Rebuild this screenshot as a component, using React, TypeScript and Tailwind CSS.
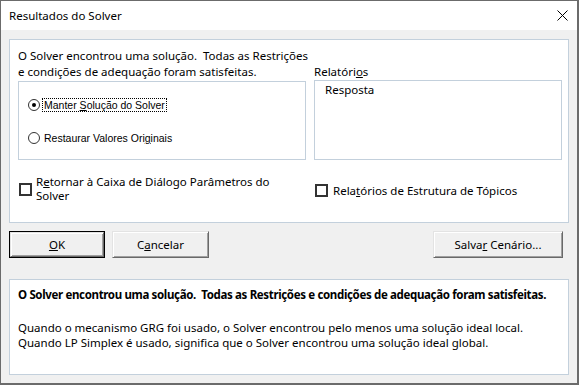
import React from "react";

const F = { fontFamily: '"Segoe UI", "Noto Sans", sans-serif' };
const S = { fontFamily: '"Liberation Sans", Arial, sans-serif' };

function Radio({ checked }: { checked?: boolean }) {
  return (
    <span className="w-[12px] h-[12px] rounded-full border border-[#333] bg-white flex items-center justify-center shrink-0">
      {checked && <span className="w-[4px] h-[4px] rounded-full bg-black" />}
    </span>
  );
}

function Check() {
  return <span className="w-[13px] h-[13px] border-2 border-[#333] bg-white shrink-0" />;
}

function Btn({ children, def, w }: { children: React.ReactNode; def?: boolean; w: string }) {
  const inner = (
    <div className="h-full w-full bg-[#f0f0f0] border border-t-[#e3e3e3] border-l-[#e3e3e3] border-r-[#696969] border-b-[#696969] shadow-[inset_1px_1px_#fff,inset_-1px_-1px_#a0a0a0] flex items-center justify-center text-[11.5px] text-black">
      {children}
    </div>
  );
  return (
    <div className={`${w} h-[27px] ${def ? "border border-black" : ""}`} style={F}>
      {inner}
    </div>
  );
}

export default function App() {
  return (
    <div className="w-[579px] h-[385px] border border-[#6b6b6b] border-r-2 border-b-2 bg-[#f0f0f0] flex flex-col overflow-hidden" style={F}>
      <div className="h-[29px] bg-white flex items-center justify-between pl-[8px] pr-[9px] shrink-0">
        <span className="text-[11.5px] text-black">Resultados do Solver</span>
        <svg width="11" height="11" viewBox="0 0 11 11">
          <path d="M0.5 0.5 L10.5 10.5 M10.5 0.5 L0.5 10.5" stroke="#000" strokeWidth="1" />
        </svg>
      </div>
      <div className="pl-[8px] flex flex-col">
        <div className="mt-[9px] w-[560px] h-[184px] bg-white border border-[#c3d0dc] pl-[8px] pt-[8px] flex flex-col">
          <div className="flex gap-[8px]">
            <div className="w-[288px] flex flex-col">
              <div className="text-[11.5px] leading-[16px] text-black whitespace-nowrap">
                O Solver encontrou uma solução.&nbsp; Todas as Restrições
                <br />
                e condições de adequação foram satisfeitas.
              </div>
              <div className="mt-[1px] h-[79px] border border-[#c3d0dc] flex flex-col pl-[9px] pt-[16px]">
                <div className="flex items-center h-[14px]">
                  <Radio checked />
                  <span
                    className="ml-[3px] text-[10.5px] leading-[12px] px-[1px] outline-1 outline-dotted outline-black text-black whitespace-nowrap"
                    style={S}
                  >
                    Manter <u>S</u>olução do Solver
                  </span>
                </div>
                <div className="flex items-center h-[14px] mt-[19px]">
                  <Radio />
                  <span className="ml-[4px] text-[10.5px] leading-[12px] text-black whitespace-nowrap" style={S}>
                    Restaurar Valores Ori<u>g</u>inais
                  </span>
                </div>
              </div>
            </div>
            <div className="w-[248px] flex flex-col pt-[16px]">
              <div className="text-[11.5px] leading-[16px] text-black">
                Relatóri<u>o</u>s
              </div>
              <div className="h-[80px] border border-[#c3d0dc] pl-[10px] pt-[1px]">
                <div className="text-[11.5px] leading-[16px] text-black">Resposta</div>
              </div>
            </div>
          </div>
          <div className="flex mt-[15px]">
            <div className="w-[296px] flex items-center gap-[4px] pl-[1px]">
              <Check />
              <div className="text-[11.5px] leading-[14px] text-black whitespace-nowrap">
                R<u>e</u>tornar à Caixa de Diálogo Parâmetros do
                <br />
                Solver
              </div>
            </div>
            <div className="flex items-center gap-[5px] pl-[1px] pt-[3px]">
              <Check />
              <div className="text-[11.5px] leading-[14px] text-black whitespace-nowrap">
                Rela<u>t</u>órios de Estrutura de Tópicos
              </div>
            </div>
          </div>
        </div>
        <div className="mt-[8px] flex w-[560px]">
          <Btn def w="w-[96px]">
            <span>
              <u>O</u>K
            </span>
          </Btn>
          <div className="ml-[7px]">
            <Btn w="w-[97px]">
              <span>
                C<u>a</u>ncelar
              </span>
            </Btn>
          </div>
          <div className="ml-auto mr-[6px]">
            <Btn w="w-[130px]">
              <span>
                Salva<u>r</u> Cenário...
              </span>
            </Btn>
          </div>
        </div>
        <div className="mt-[21px] w-[560px] h-[96px] bg-white border border-[#c3d0dc] pl-[8px] pt-[7px] text-[11.5px] leading-[15px] text-black">
          <div className="font-bold whitespace-nowrap tracking-[-0.35px]">
            O Solver encontrou uma solução.&nbsp; Todas as Restrições e condições de adequação foram satisfeitas.
          </div>
          <div className="mt-[18px] whitespace-nowrap">
            Quando o mecanismo GRG foi usado, o Solver encontrou pelo menos uma solução ideal local.
            <br />
            Quando LP Simplex é usado, significa que o Solver encontrou uma solução ideal global.
          </div>
        </div>
      </div>
    </div>
  );
}
